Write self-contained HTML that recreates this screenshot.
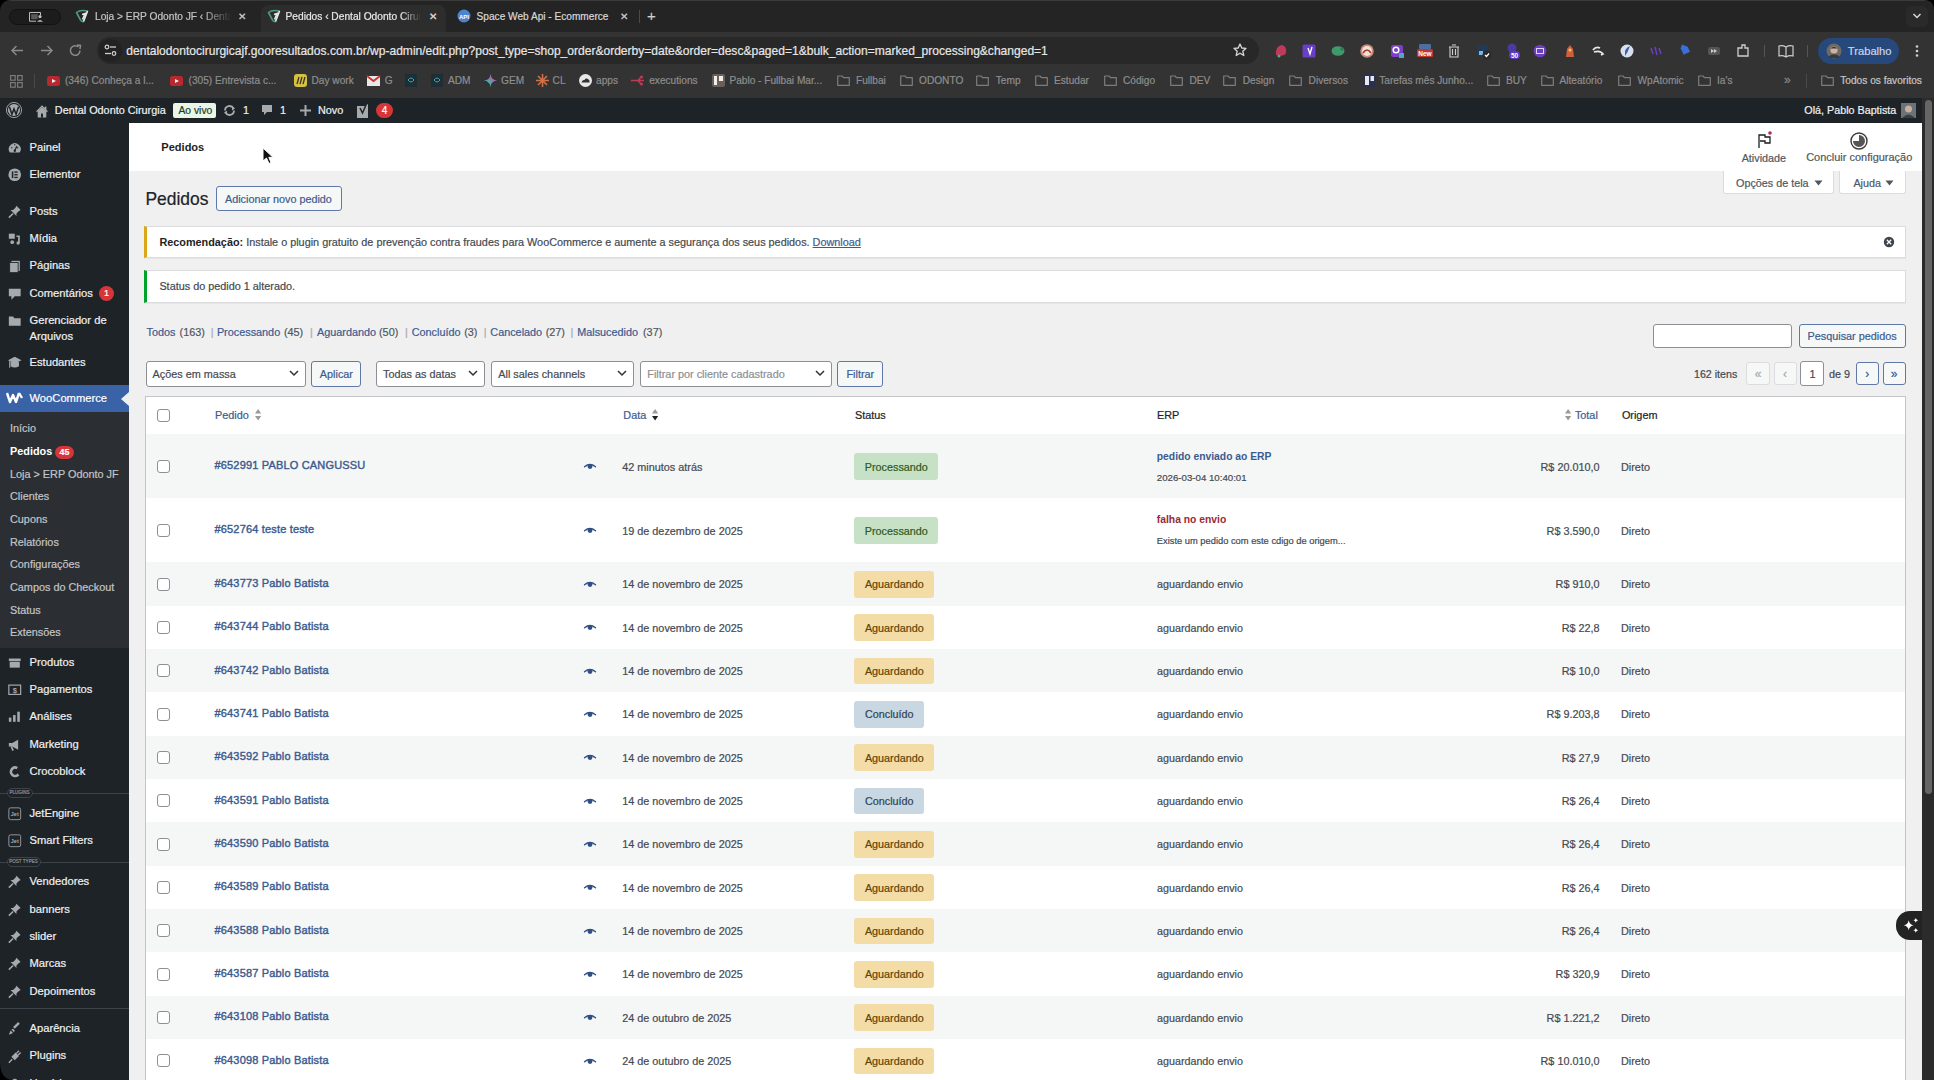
<!DOCTYPE html><html><head><meta charset="utf-8"><title>Pedidos</title><style>
html,body{margin:0;padding:0;}
body{width:1934px;height:1080px;overflow:hidden;position:relative;background:#1d2327;font-family:"Liberation Sans", sans-serif;}
.t{position:absolute;white-space:nowrap;line-height:1;-webkit-text-stroke:0.2px currentColor;}
b{-webkit-text-stroke:0;}
.b{position:absolute;box-sizing:border-box;}
svg{position:absolute;overflow:visible;}
</style></head><body>
<div class="b" style="left:0px;top:0px;width:1934px;height:32px;background:#242424;"></div>
<div class="b" style="left:0px;top:32px;width:1934px;height:65px;background:#353535;"></div>
<div class="b" style="left:0px;top:0px;width:1934px;height:1px;background:#3a3a3a;"></div>
<div class="b" style="left:8.8px;top:8.5px;width:52.2px;height:16px;background:#1c1c1c;border-radius:8px;border:1px solid #121212;"></div>
<svg style="left:29px;top:12px;" width="15" height="10" viewBox="0 0 15 10"><path d="M11.5 3 V0.5 H0.5 V9.2 H7" stroke="#bdbdbd" fill="none" stroke-width="1"/><rect x="2.2" y="2.2" width="6.5" height="5" fill="#5a5a5a"/><circle cx="11" cy="4.6" r="1.6" fill="#bdbdbd"/><path d="M8 9.8 Q11 6.2 14 9.8 Z" fill="#bdbdbd"/></svg>
<svg style="left:75px;top:9px;" width="14" height="14" viewBox="0 0 14 14"><path d="M1.5 3.5 Q5 0.5 12.5 2 L8.5 12.5 Q6.5 13 5.5 11 Z" fill="none" stroke="#4f9a7e" stroke-width="1.6" stroke-linejoin="round"/><path d="M12.5 2 L8.5 12.5 M7 5.5 L10 4.5 L7.5 10.5" fill="none" stroke="#e6e6e6" stroke-width="1.5"/></svg>
<div class="t" style="left:95px;top:12.37px;font-size:10.2px;color:#c4c4c4;font-weight:normal;width:137px;overflow:hidden;-webkit-mask-image:linear-gradient(90deg,#000 78%,transparent);">Loja &gt; ERP Odonto JF ‹ Denta</div>
<div class="t" style="left:238px;top:12.04px;font-size:10px;color:#d0d0d0;font-weight:normal;">✕</div>
<div class="b" style="left:261px;top:5px;width:185px;height:32px;background:#2d2d2d;border-radius:8px 8px 0 0;"></div>
<svg style="left:267px;top:9px;" width="14" height="14" viewBox="0 0 14 14"><path d="M1.5 3.5 Q5 0.5 12.5 2 L8.5 12.5 Q6.5 13 5.5 11 Z" fill="none" stroke="#4f9a7e" stroke-width="1.6" stroke-linejoin="round"/><path d="M12.5 2 L8.5 12.5 M7 5.5 L10 4.5 L7.5 10.5" fill="none" stroke="#e6e6e6" stroke-width="1.5"/></svg>
<div class="t" style="left:285.5px;top:12.37px;font-size:10.2px;color:#e8e8e8;font-weight:normal;width:135px;overflow:hidden;-webkit-mask-image:linear-gradient(90deg,#000 85%,transparent);">Pedidos ‹ Dental Odonto Cirurgia</div>
<div class="t" style="left:429px;top:12.04px;font-size:10px;color:#e0e0e0;font-weight:normal;">✕</div>
<svg style="left:457px;top:9px;" width="14" height="14" viewBox="0 0 14 14"><circle cx="7" cy="7" r="6.5" fill="#4a86d0"/><text x="7" y="9.5" font-size="6" text-anchor="middle" fill="#fff" font-family="Liberation Sans" font-weight="bold">API</text></svg>
<div class="t" style="left:476.6px;top:12.43px;font-size:10.12px;color:#d8d8d8;font-weight:normal;">Space Web Api - Ecommerce</div>
<div class="t" style="left:620px;top:12.04px;font-size:10px;color:#d0d0d0;font-weight:normal;">✕</div>
<div class="b" style="left:639px;top:10px;width:1px;height:13px;background:#4a4a4a;"></div>
<div class="t" style="left:647px;top:8.3px;font-size:15px;color:#d0d0d0;font-weight:normal;">+</div>
<div class="b" style="left:1906px;top:6px;width:22px;height:21px;background:#2a2a2a;border-radius:6px;"></div>
<svg style="left:1912px;top:12px;" width="10" height="8" viewBox="0 0 10 8"><path d="M1.5 2 L5 5.5 L8.5 2" fill="none" stroke="#d8d8d8" stroke-width="1.5"/></svg>
<div class="b" style="left:0px;top:32px;width:1934px;height:33px;background:#333333;"></div>
<svg style="left:10px;top:44px;" width="14" height="13" viewBox="0 0 14 13"><path d="M13 6.5 H2 M6.5 2 L2 6.5 L6.5 11" fill="none" stroke="#8a8a8a" stroke-width="1.5"/></svg>
<svg style="left:40px;top:44px;" width="14" height="13" viewBox="0 0 14 13"><path d="M1 6.5 H12 M7.5 2 L12 6.5 L7.5 11" fill="none" stroke="#8a8a8a" stroke-width="1.5"/></svg>
<svg style="left:69px;top:44px;" width="13" height="13" viewBox="0 0 13 13"><path d="M11 6.5 A4.8 4.8 0 1 1 9.5 3" fill="none" stroke="#8a8a8a" stroke-width="1.5"/><path d="M8 1 L11.5 1.5 L11 5" fill="none" stroke="#8a8a8a" stroke-width="1.5"/></svg>
<div class="b" style="left:97px;top:37px;width:1162px;height:27px;background:#282828;border-radius:14px;"></div>
<div class="b" style="left:99px;top:39px;width:23px;height:23px;background:#222;border-radius:12px;"></div>
<svg style="left:104px;top:44px;" width="14" height="13" viewBox="0 0 14 13"><circle cx="3" cy="3" r="1.8" fill="none" stroke="#d0d0d0" stroke-width="1.2"/><path d="M6 3 H12" stroke="#d0d0d0" stroke-width="1.3"/><circle cx="10" cy="9.5" r="1.8" fill="none" stroke="#d0d0d0" stroke-width="1.2"/><path d="M1 9.5 H7" stroke="#d0d0d0" stroke-width="1.3"/></svg>
<div class="t" style="left:126.3px;top:44.8px;font-size:12.05px;color:#e6e6e6;font-weight:normal;">dentalodontocirurgicajf.gooresultados.com.br/wp-admin/edit.php?post_type=shop_order&amp;orderby=date&amp;order=desc&amp;paged=1&amp;bulk_action=marked_processing&amp;changed=1</div>
<svg style="left:1233px;top:43px;" width="14" height="14" viewBox="0 0 14 14"><path d="M7 1 L8.8 5 L13 5.3 L9.8 8.2 L10.8 12.5 L7 10.2 L3.2 12.5 L4.2 8.2 L1 5.3 L5.2 5 Z" fill="none" stroke="#d8d8d8" stroke-width="1.3" stroke-linejoin="round"/></svg>
<svg style="left:1280.5px;top:50.5px;" width="1" height="1" viewBox="0 0 1 1"><path d="M-5 4 Q-6 -5 1 -6 Q6 -5 5 2 Q3 6 -5 4Z" fill="#c0395a"/><circle cx="-2" cy="5" r="1.5" fill="#4caf88"/></svg>
<svg style="left:1309.4px;top:50.5px;" width="1" height="1" viewBox="0 0 1 1"><rect x="-6.5" y="-6.5" width="13" height="13" rx="1.5" fill="#6a3fc8"/><path d="M-1 -3 L1 3 L3 -4" stroke="#fff" stroke-width="1.3" fill="none"/></svg>
<svg style="left:1338px;top:50.5px;" width="1" height="1" viewBox="0 0 1 1"><ellipse cx="0" cy="0" rx="6.5" ry="4.8" fill="#3e9a6a"/><circle cx="4" cy="-2" r="1.8" fill="#2d7b55"/></svg>
<svg style="left:1367px;top:50.5px;" width="1" height="1" viewBox="0 0 1 1"><circle cx="0" cy="0" r="6.8" fill="#c98a7a"/><circle cx="0" cy="0" r="5" fill="#efe2da"/><path d="M-4 2 Q0 -4 4 2" stroke="#b03a2e" stroke-width="1.6" fill="none"/></svg>
<svg style="left:1397px;top:50.5px;" width="1" height="1" viewBox="0 0 1 1"><rect x="-6" y="-6" width="12" height="12" rx="2" fill="#7b3fc9"/><circle cx="-1" cy="-1" r="2.8" fill="none" stroke="#fff" stroke-width="1.5"/><rect x="2" y="2" width="5" height="5" fill="#4aa8c8"/></svg>
<svg style="left:1424.8px;top:50.5px;" width="1" height="1" viewBox="0 0 1 1"><rect x="-6" y="-7" width="12" height="5" rx="1" fill="#4b6fa0"/><rect x="-8" y="-2" width="16" height="8" rx="1.5" fill="#c0392b"/><text x="0" y="4.5" font-size="6.5" font-family="Liberation Sans" font-weight="bold" fill="#fff" text-anchor="middle">New</text></svg>
<svg style="left:1453.6px;top:50.5px;" width="1" height="1" viewBox="0 0 1 1"><path d="M-5 -4 H5 M-4 -4 V6 H4 V-4 M-1.5 -2 V4 M1.5 -2 V4 M-2 -6 H2" stroke="#cfcfcf" stroke-width="1.1" fill="none"/></svg>
<svg style="left:1484.3px;top:50.5px;" width="1" height="1" viewBox="0 0 1 1"><rect x="-6.5" y="-6" width="10" height="11" fill="#1e3b5c"/><rect x="-5" y="0" width="4" height="4" fill="#7fb3e0"/><circle cx="3" cy="4" r="4.5" fill="#2a2a2a"/><path d="M1 4 L2.5 5.5 L5 2.5" stroke="#fff" stroke-width="1.2" fill="none"/></svg>
<svg style="left:1514px;top:50.5px;" width="1" height="1" viewBox="0 0 1 1"><circle cx="-2" cy="-3" r="4.5" fill="#4b3aa0"/><rect x="-5" y="0" width="11" height="8" rx="4" fill="#5a3ec8"/><text x="0.5" y="6.5" font-size="6.5" font-family="Liberation Sans" font-weight="bold" fill="#fff" text-anchor="middle">50</text></svg>
<svg style="left:1540px;top:50.5px;" width="1" height="1" viewBox="0 0 1 1"><circle cx="0" cy="0" r="6.3" fill="#6c3fc0"/><rect x="-3.5" y="-2.5" width="7" height="5" fill="none" stroke="#e0d0ff" stroke-width="1"/></svg>
<svg style="left:1569.7px;top:50.5px;" width="1" height="1" viewBox="0 0 1 1"><path d="M-4 6 L-3 -2 L0 -6 L3 -2 L4 6 Z" fill="#d0603a"/><circle cx="0" cy="-1" r="1.5" fill="#f0c080"/></svg>
<svg style="left:1597.7px;top:50.5px;" width="1" height="1" viewBox="0 0 1 1"><path d="M-5 -1 Q-2 -5 2 -3 M-4 1 Q2 -1 5 3 L3 4" stroke="#e8e8e8" stroke-width="1.8" fill="none"/></svg>
<svg style="left:1626.7px;top:50.5px;" width="1" height="1" viewBox="0 0 1 1"><circle cx="0" cy="0" r="6.5" fill="#d8e0ee"/><path d="M-2 5 Q-3 -3 3 -5 Q1 1 -2 5Z" fill="#3a5fa8"/></svg>
<svg style="left:1656px;top:50.5px;" width="1" height="1" viewBox="0 0 1 1"><path d="M-5 -3 L-3 3 M-1 -4 L1 4 M3 -3 L5 3" stroke="#6a3fc8" stroke-width="1.5"/></svg>
<svg style="left:1684.7px;top:50.5px;" width="1" height="1" viewBox="0 0 1 1"><path d="M-5 -5 H1 L5 -1 L0 4 L-5 -1 Z" fill="#3a6fd8" transform="rotate(20)"/></svg>
<svg style="left:1713.7px;top:50.5px;" width="1" height="1" viewBox="0 0 1 1"><rect x="-6" y="-4" width="12" height="8" rx="2.5" fill="#555"/><path d="M-3 -2 L0 0 L-3 2Z M0 -2 L3 0 L0 2Z" fill="#ccc"/></svg>
<svg style="left:1742.7px;top:50.5px;" width="1" height="1" viewBox="0 0 1 1"><path d="M-5 -3 H-1 V-6 H2 V-3 H5 V5 H-5 Z" fill="none" stroke="#cfcfcf" stroke-width="1.3"/></svg>
<div class="b" style="left:1764px;top:45px;width:1px;height:12px;background:#555;"></div>
<svg style="left:1786px;top:50.5px;" width="1" height="1" viewBox="0 0 1 1"><path d="M-7 -5 Q-3.5 -6 0 -4 Q3.5 -6 7 -5 V5 Q3.5 4 0 6 Q-3.5 4 -7 5 Z M0 -4 V6" fill="none" stroke="#cfcfcf" stroke-width="1.2"/></svg>
<div class="b" style="left:1807px;top:45px;width:1px;height:12px;background:#555;"></div>
<div class="b" style="left:1818px;top:38px;width:81px;height:26px;background:#27487a;border-radius:13px;"></div>
<svg style="left:1833.6px;top:51px;" width="1" height="1" viewBox="0 0 1 1"><circle cx="0" cy="0" r="7.5" fill="#6f6a66"/><circle cx="0" cy="-1" r="3.6" fill="#c9b3a5"/><path d="M-5.5 5.5 Q0 1 5.5 5.5 L4 7 H-4Z" fill="#3a3a3a"/><path d="M-3.6 -2.5 Q0 -6 3.6 -2.5" fill="#3b3330"/></svg>
<div class="t" style="left:1847.8px;top:45.52px;font-size:11.2px;color:#c9d6ea;font-weight:normal;">Trabalho</div>
<svg style="left:1917px;top:50.5px;" width="1" height="1" viewBox="0 0 1 1"><circle cx="0" cy="-4.5" r="1.3" fill="#cfcfcf"/><circle cx="0" cy="0" r="1.3" fill="#cfcfcf"/><circle cx="0" cy="4.5" r="1.3" fill="#cfcfcf"/></svg>
<div class="b" style="left:0px;top:65px;width:1934px;height:33px;background:#333333;"></div>
<svg style="left:10px;top:75px;" width="13" height="13" viewBox="0 0 13 13"><rect x="0.6" y="0.6" width="4.6" height="4.6" fill="none" stroke="#7a7a7a" stroke-width="1.2"/><rect x="7.6" y="0.6" width="4.6" height="4.6" fill="none" stroke="#7a7a7a" stroke-width="1.2"/><rect x="0.6" y="7.6" width="4.6" height="4.6" fill="none" stroke="#7a7a7a" stroke-width="1.2"/><rect x="7.6" y="7.6" width="4.6" height="4.6" fill="none" stroke="#7a7a7a" stroke-width="1.2"/></svg>
<div class="b" style="left:34px;top:74px;width:1px;height:14px;background:#4a4a4a;"></div>
<svg style="left:47.2px;top:75.5px;" width="13" height="10" viewBox="0 0 13 10"><rect x="0" y="0" width="13" height="10" rx="2.5" fill="#b8282e"/><path d="M5 3 L9 5 L5 7Z" fill="#eee"/></svg>
<div class="t" style="left:65px;top:75.92px;font-size:10.13px;color:#8e8e8e;font-weight:normal;">(346) Conheça a l...</div>
<svg style="left:170px;top:75.5px;" width="13" height="10" viewBox="0 0 13 10"><rect x="0" y="0" width="13" height="10" rx="2.5" fill="#b8282e"/><path d="M5 3 L9 5 L5 7Z" fill="#eee"/></svg>
<div class="t" style="left:188.6px;top:75.92px;font-size:10.13px;color:#8e8e8e;font-weight:normal;">(305) Entrevista c...</div>
<svg style="left:293.6px;top:74.0px;" width="13" height="13" viewBox="0 0 13 13"><rect x="0" y="0" width="13" height="13" rx="3" fill="#d8c040"/><path d="M3 10 L5 3 M6 10 L8 3 M9 10 L11 3" stroke="#333" stroke-width="1.3"/></svg>
<div class="t" style="left:311.5px;top:75.92px;font-size:10.13px;color:#8e8e8e;font-weight:normal;">Day work</div>
<svg style="left:366.8px;top:74.0px;" width="13" height="13" viewBox="0 0 13 13"><rect x="0" y="2" width="13" height="10" fill="#e8e8e8"/><path d="M0 2 L6.5 7 L13 2" stroke="#d03030" stroke-width="1.8" fill="none"/></svg>
<div class="t" style="left:384.7px;top:75.92px;font-size:10.13px;color:#8e8e8e;font-weight:normal;">G</div>
<svg style="left:405px;top:74.0px;" width="13" height="13" viewBox="0 0 13 13"><rect x="0" y="0" width="12" height="13" fill="#1e2e34"/><path d="M3 6 Q6 2 9 6 Q6 10 3 6" stroke="#3aa8b8" stroke-width="1" fill="none"/></svg>
<svg style="left:430.6px;top:74.0px;" width="13" height="13" viewBox="0 0 13 13"><rect x="0" y="0" width="12" height="13" fill="#1e2e34"/><path d="M3 6 Q6 2 9 6 Q6 10 3 6" stroke="#3aa8b8" stroke-width="1" fill="none"/></svg>
<div class="t" style="left:448px;top:75.92px;font-size:10.13px;color:#8e8e8e;font-weight:normal;">ADM</div>
<svg style="left:483.7px;top:74.0px;" width="13" height="13" viewBox="0 0 13 13"><path d="M6.5 0 Q7 6 13 6.5 Q7 7 6.5 13 Q6 7 0 6.5 Q6 6 6.5 0Z" fill="#5a8ae8"/><path d="M6.5 0 Q7 6 13 6.5 L6.5 6.5Z" fill="#e85a5a"/><path d="M0 6.5 Q6 7 6.5 13 L6.5 6.5Z" fill="#4ac060"/></svg>
<div class="t" style="left:501px;top:75.92px;font-size:10.13px;color:#8e8e8e;font-weight:normal;">GEM</div>
<svg style="left:535.8px;top:74.0px;" width="13" height="13" viewBox="0 0 13 13"><path d="M6.5 0 V13 M0 6.5 H13 M2 2 L11 11 M11 2 L2 11" stroke="#d0704a" stroke-width="1.6"/></svg>
<div class="t" style="left:552.6px;top:75.92px;font-size:10.13px;color:#8e8e8e;font-weight:normal;">CL</div>
<svg style="left:578.7px;top:74.0px;" width="13" height="13" viewBox="0 0 13 13"><circle cx="6.5" cy="6.5" r="6.5" fill="#e8e8e8"/><path d="M2.5 8.5 Q3 5.5 5.5 6 Q7 3.5 9.5 5.5 Q11 6 10.5 8.5Z" fill="#333"/></svg>
<div class="t" style="left:596px;top:75.92px;font-size:10.13px;color:#8e8e8e;font-weight:normal;">apps</div>
<svg style="left:631.3px;top:74.0px;" width="13" height="13" viewBox="0 0 13 13"><path d="M0 6.5 H13 M7 6.5 L10 3 M7 6.5 L10 10" stroke="#c03a5a" stroke-width="1.5" fill="none"/><circle cx="10.5" cy="3" r="1.5" fill="#c03a5a"/><circle cx="10.5" cy="10" r="1.5" fill="#c03a5a"/></svg>
<div class="t" style="left:649.2px;top:75.92px;font-size:10.13px;color:#8e8e8e;font-weight:normal;">executions</div>
<svg style="left:712px;top:74.0px;" width="13" height="13" viewBox="0 0 13 13"><rect x="0" y="0" width="13" height="13" rx="2" fill="#6a6058"/><rect x="2" y="2" width="3" height="9" fill="#eee"/><rect x="7" y="2" width="4" height="5" fill="#eee"/></svg>
<div class="t" style="left:729.4px;top:75.92px;font-size:10.13px;color:#8e8e8e;font-weight:normal;">Pablo - Fullbai Mar...</div>
<svg style="left:836.8px;top:75.0px;" width="13" height="11" viewBox="0 0 13 11"><path d="M0.7 1 H5 L6.5 2.7 H12.3 V10.3 H0.7 Z" fill="none" stroke="#7d7d7d" stroke-width="1.2" stroke-linejoin="round"/></svg>
<div class="t" style="left:856px;top:75.92px;font-size:10.13px;color:#8e8e8e;font-weight:normal;">Fullbai</div>
<svg style="left:900px;top:75.0px;" width="13" height="11" viewBox="0 0 13 11"><path d="M0.7 1 H5 L6.5 2.7 H12.3 V10.3 H0.7 Z" fill="none" stroke="#7d7d7d" stroke-width="1.2" stroke-linejoin="round"/></svg>
<div class="t" style="left:919px;top:75.92px;font-size:10.13px;color:#8e8e8e;font-weight:normal;">ODONTO</div>
<svg style="left:976px;top:75.0px;" width="13" height="11" viewBox="0 0 13 11"><path d="M0.7 1 H5 L6.5 2.7 H12.3 V10.3 H0.7 Z" fill="none" stroke="#7d7d7d" stroke-width="1.2" stroke-linejoin="round"/></svg>
<div class="t" style="left:995.8px;top:75.92px;font-size:10.13px;color:#8e8e8e;font-weight:normal;">Temp</div>
<svg style="left:1035px;top:75.0px;" width="13" height="11" viewBox="0 0 13 11"><path d="M0.7 1 H5 L6.5 2.7 H12.3 V10.3 H0.7 Z" fill="none" stroke="#7d7d7d" stroke-width="1.2" stroke-linejoin="round"/></svg>
<div class="t" style="left:1054px;top:75.92px;font-size:10.13px;color:#8e8e8e;font-weight:normal;">Estudar</div>
<svg style="left:1103.8px;top:75.0px;" width="13" height="11" viewBox="0 0 13 11"><path d="M0.7 1 H5 L6.5 2.7 H12.3 V10.3 H0.7 Z" fill="none" stroke="#7d7d7d" stroke-width="1.2" stroke-linejoin="round"/></svg>
<div class="t" style="left:1123px;top:75.92px;font-size:10.13px;color:#8e8e8e;font-weight:normal;">Código</div>
<svg style="left:1170.3px;top:75.0px;" width="13" height="11" viewBox="0 0 13 11"><path d="M0.7 1 H5 L6.5 2.7 H12.3 V10.3 H0.7 Z" fill="none" stroke="#7d7d7d" stroke-width="1.2" stroke-linejoin="round"/></svg>
<div class="t" style="left:1189.4px;top:75.92px;font-size:10.13px;color:#8e8e8e;font-weight:normal;">DEV</div>
<svg style="left:1223.4px;top:75.0px;" width="13" height="11" viewBox="0 0 13 11"><path d="M0.7 1 H5 L6.5 2.7 H12.3 V10.3 H0.7 Z" fill="none" stroke="#7d7d7d" stroke-width="1.2" stroke-linejoin="round"/></svg>
<div class="t" style="left:1242.8px;top:75.92px;font-size:10.13px;color:#8e8e8e;font-weight:normal;">Design</div>
<svg style="left:1289.2px;top:75.0px;" width="13" height="11" viewBox="0 0 13 11"><path d="M0.7 1 H5 L6.5 2.7 H12.3 V10.3 H0.7 Z" fill="none" stroke="#7d7d7d" stroke-width="1.2" stroke-linejoin="round"/></svg>
<div class="t" style="left:1308.6px;top:75.92px;font-size:10.13px;color:#8e8e8e;font-weight:normal;">Diversos</div>
<svg style="left:1363.2px;top:74.0px;" width="13" height="13" viewBox="0 0 13 13"><rect x="0" y="0" width="13" height="13" rx="2" fill="#2a3050"/><rect x="2" y="2" width="4" height="9" fill="#e8e8f0"/><rect x="7.5" y="2" width="3.5" height="5" fill="#e8e8f0"/></svg>
<div class="t" style="left:1379.3px;top:75.92px;font-size:10.13px;color:#8e8e8e;font-weight:normal;">Tarefas mês Junho...</div>
<svg style="left:1487px;top:75.0px;" width="13" height="11" viewBox="0 0 13 11"><path d="M0.7 1 H5 L6.5 2.7 H12.3 V10.3 H0.7 Z" fill="none" stroke="#7d7d7d" stroke-width="1.2" stroke-linejoin="round"/></svg>
<div class="t" style="left:1506px;top:75.92px;font-size:10.13px;color:#8e8e8e;font-weight:normal;">BUY</div>
<svg style="left:1540.5px;top:75.0px;" width="13" height="11" viewBox="0 0 13 11"><path d="M0.7 1 H5 L6.5 2.7 H12.3 V10.3 H0.7 Z" fill="none" stroke="#7d7d7d" stroke-width="1.2" stroke-linejoin="round"/></svg>
<div class="t" style="left:1559.5px;top:75.92px;font-size:10.13px;color:#8e8e8e;font-weight:normal;">Alteatório</div>
<svg style="left:1618.2px;top:75.0px;" width="13" height="11" viewBox="0 0 13 11"><path d="M0.7 1 H5 L6.5 2.7 H12.3 V10.3 H0.7 Z" fill="none" stroke="#7d7d7d" stroke-width="1.2" stroke-linejoin="round"/></svg>
<div class="t" style="left:1637.5px;top:75.92px;font-size:10.13px;color:#8e8e8e;font-weight:normal;">WpAtomic</div>
<svg style="left:1698.4px;top:75.0px;" width="13" height="11" viewBox="0 0 13 11"><path d="M0.7 1 H5 L6.5 2.7 H12.3 V10.3 H0.7 Z" fill="none" stroke="#7d7d7d" stroke-width="1.2" stroke-linejoin="round"/></svg>
<div class="t" style="left:1717px;top:75.92px;font-size:10.13px;color:#8e8e8e;font-weight:normal;">Ia's</div>
<div class="t" style="left:1784px;top:74.34px;font-size:12px;color:#8a8a8a;font-weight:normal;">»</div>
<div class="b" style="left:1806px;top:74px;width:1px;height:14px;background:#4a4a4a;"></div>
<svg style="left:1820.7px;top:75.0px;" width="13" height="11" viewBox="0 0 13 11"><path d="M0.7 1 H5 L6.5 2.7 H12.3 V10.3 H0.7 Z" fill="none" stroke="#7d7d7d" stroke-width="1.2" stroke-linejoin="round"/></svg>
<div class="t" style="left:1840.3px;top:75.92px;font-size:10.13px;color:#c8c8c8;font-weight:normal;">Todos os favoritos</div>
<div class="b" style="left:0px;top:98px;width:1922px;height:25px;background:#1d2327;"></div>
<svg style="left:6px;top:102.4px;" width="16" height="16" viewBox="0 0 16 16"><circle cx="8" cy="8" r="7.6" fill="none" stroke="#a7aaad" stroke-width="0.9"/><circle cx="8" cy="8" r="6.1" fill="#a7aaad"/><path d="M3.4 4.8 L5.9 12.2 L8 6.9 L10.1 12.2 L12.6 4.8" fill="none" stroke="#1d2327" stroke-width="1.5"/></svg>
<svg style="left:36px;top:104.5px;" width="12" height="13" viewBox="0 0 12 13"><rect x="8.6" y="1.6" width="1.8" height="3.5" fill="#a7aaad"/><path d="M1.7 6.3 L6 2.3 L10.3 6.3 V12.5 H1.7 Z" fill="#a7aaad"/><path d="M0.6 6.8 L6 1.2 L11.4 6.8" fill="none" stroke="#a7aaad" stroke-width="1.3"/><rect x="5" y="8.6" width="2" height="3.9" fill="#1d2327"/></svg>
<div class="t" style="left:54.8px;top:105.12px;font-size:10.85px;color:#f0f0f1;font-weight:normal;">Dental Odonto Cirurgia</div>
<div class="b" style="left:173px;top:103px;width:43px;height:15px;background:#eaf6e6;border-radius:2px;"></div>
<div class="t" style="left:178.5px;top:105.58px;font-size:10.3px;color:#1f3a1f;font-weight:normal;">Ao vivo</div>
<svg style="left:223px;top:104px;" width="13" height="13" viewBox="0 0 13 13"><path d="M2 6.5 A4.5 4.5 0 0 1 10.5 4.5 M11 6.5 A4.5 4.5 0 0 1 2.5 8.5" fill="none" stroke="#a7aaad" stroke-width="1.8"/><path d="M9 2 L12 4.5 L9 6.5Z M4 6.5 L1 8.5 L4 11Z" fill="#a7aaad"/></svg>
<div class="t" style="left:243px;top:105.12px;font-size:10.85px;color:#f0f0f1;font-weight:normal;">1</div>
<svg style="left:261px;top:104px;" width="12" height="13" viewBox="0 0 12 13"><path d="M1 1 H11 V8 H6 L3 11 V8 H1 Z" fill="#a7aaad"/></svg>
<div class="t" style="left:280px;top:105.12px;font-size:10.85px;color:#f0f0f1;font-weight:normal;">1</div>
<svg style="left:300px;top:105px;" width="11" height="11" viewBox="0 0 11 11"><path d="M5.5 0 V11 M0 5.5 H11" stroke="#a7aaad" stroke-width="2"/></svg>
<div class="t" style="left:318px;top:105.12px;font-size:10.85px;color:#f0f0f1;font-weight:normal;">Novo</div>
<svg style="left:356px;top:103px;" width="14" height="15" viewBox="0 0 14 15"><path d="M1 3 H9 L12 1 V15 H1 Z" fill="#a7aaad"/><path d="M4 5 L6.5 10 L10 2" stroke="#1d2327" stroke-width="1.5" fill="none"/></svg>
<div class="b" style="left:376px;top:103px;width:17px;height:15px;background:#d63638;border-radius:8px;"></div>
<div class="t" style="left:84.5px;width:600px;text-align:center;top:105.83px;font-size:10px;color:#fff;font-weight:normal;">4</div>
<div class="t" style="left:1804.3px;top:105.2px;font-size:10.75px;color:#f0f0f1;font-weight:normal;">Olá, Pablo Baptista</div>
<div class="b" style="left:1901px;top:103px;width:15px;height:15px;background:#7b8088;"></div>
<svg style="left:1901px;top:103px;" width="15" height="15" viewBox="0 0 15 15"><rect width="15" height="15" fill="#6d7278"/><circle cx="7.5" cy="6" r="3.5" fill="#c8b0a0"/><path d="M1 15 Q7.5 8 14 15Z" fill="#3a3f45"/></svg>
<div class="b" style="left:0px;top:123px;width:129px;height:957px;background:#1d2327;"></div>
<div class="t" style="left:29.5px;top:141.72px;font-size:11.2px;color:#f0f0f1;font-weight:normal;">Painel</div>
<svg style="left:7.8px;top:140.89999999999998px" width="13.5" height="13.5" viewBox="0 0 16 16"><path d="M2.2 13.5 A7 7 0 1 1 13.8 13.5 Z" fill="#a7aaad"/><path d="M8 11.5 L10.5 6" stroke="#1d2327" stroke-width="1.4"/><circle cx="8" cy="11.5" r="1.4" fill="#1d2327"/><circle cx="4.5" cy="8" r="0.8" fill="#1d2327"/><circle cx="8" cy="4.5" r="0.8" fill="#1d2327"/><circle cx="11.5" cy="8" r="0.8" fill="#1d2327"/></svg>
<div class="t" style="left:29.5px;top:169.02px;font-size:11.2px;color:#f0f0f1;font-weight:normal;">Elementor</div>
<svg style="left:7.8px;top:168.2px" width="13.5" height="13.5" viewBox="0 0 16 16"><circle cx="8" cy="8" r="7.5" fill="#a7aaad"/><rect x="4.5" y="4" width="1.8" height="8" fill="#1d2327"/><rect x="7.5" y="4" width="4" height="1.6" fill="#1d2327"/><rect x="7.5" y="7.2" width="4" height="1.6" fill="#1d2327"/><rect x="7.5" y="10.4" width="4" height="1.6" fill="#1d2327"/></svg>
<div class="t" style="left:29.5px;top:205.72px;font-size:11.2px;color:#f0f0f1;font-weight:normal;">Posts</div>
<svg style="left:7.8px;top:204.89999999999998px" width="13.5" height="13.5" viewBox="0 0 16 16"><path d="M10 1 L15 6 L13 7 L10 10 L10 13 L3 6 L6 6 L9 3 Z" fill="#a7aaad"/><path d="M6 10 L1 15" stroke="#a7aaad" stroke-width="1.8"/></svg>
<div class="t" style="left:29.5px;top:233.02px;font-size:11.2px;color:#f0f0f1;font-weight:normal;">Mídia</div>
<svg style="left:7.8px;top:232.2px" width="13.5" height="13.5" viewBox="0 0 16 16"><rect x="1" y="2" width="7" height="6" fill="#a7aaad"/><path d="M10 4 H14 V13 A2 2 0 1 1 12 11 V6 H10Z" fill="#a7aaad"/><circle cx="5" cy="12" r="2.2" fill="#a7aaad"/></svg>
<div class="t" style="left:29.5px;top:260.42px;font-size:11.2px;color:#f0f0f1;font-weight:normal;">Páginas</div>
<svg style="left:7.8px;top:259.59999999999997px" width="13.5" height="13.5" viewBox="0 0 16 16"><rect x="4" y="1" width="10" height="12" fill="#a7aaad"/><rect x="2" y="3" width="10" height="12" fill="#a7aaad" stroke="#1d2327" stroke-width="1"/></svg>
<div class="t" style="left:29.5px;top:287.72px;font-size:11.2px;color:#f0f0f1;font-weight:normal;">Comentários</div>
<svg style="left:7.8px;top:286.9px" width="13.5" height="13.5" viewBox="0 0 16 16"><path d="M1 2 H15 V11 H8 L4 15 V11 H1 Z" fill="#a7aaad"/></svg>
<div class="t" style="left:29.5px;top:315.22px;font-size:11.2px;color:#f0f0f1;font-weight:normal;">Gerenciador de</div>
<svg style="left:7.8px;top:314.4px" width="13.5" height="13.5" viewBox="0 0 16 16"><path d="M1 3 H6 L7.5 5 H15 V14 H1 Z" fill="#a7aaad"/></svg>
<div class="t" style="left:29.5px;top:356.72px;font-size:11.2px;color:#f0f0f1;font-weight:normal;">Estudantes</div>
<svg style="left:7.8px;top:355.9px" width="13.5" height="13.5" viewBox="0 0 16 16"><path d="M0 5 L8 1 L16 5 L8 9 Z" fill="#a7aaad"/><path d="M3 7 V12 Q8 15 13 12 V7" fill="#a7aaad"/><path d="M2 5 V14" stroke="#a7aaad" stroke-width="1.2"/></svg>
<div class="t" style="left:29.5px;top:330.52px;font-size:11.2px;color:#f0f0f1;font-weight:normal;">Arquivos</div>
<div class="b" style="left:99px;top:286px;width:15px;height:15px;background:#d63638;border-radius:8px;"></div>
<div class="t" style="left:-193.5px;width:600px;text-align:center;top:288.88px;font-size:9px;color:#fff;font-weight:normal;">1</div>
<div class="b" style="left:0px;top:385px;width:129px;height:27px;background:#3a62a6;"></div>
<svg style="left:6px;top:391px;" width="18" height="12" viewBox="0 0 18 12"><path d="M1 2 L4 11 L7 4 L10 11 L13 2" fill="none" stroke="#fff" stroke-width="2.4" stroke-linejoin="round"/><path d="M13 2 L16 7" stroke="#fff" stroke-width="2.4"/></svg>
<div class="t" style="left:29.5px;top:392.82px;font-size:11.2px;color:#fff;font-weight:normal;">WooCommerce</div>
<svg style="left:121px;top:391.5px;" width="8" height="14" viewBox="0 0 8 14"><path d="M8 0 L0 7 L8 14 Z" fill="#f0f0f1"/></svg>
<div class="b" style="left:0px;top:412px;width:129px;height:236px;background:#2b2f33;"></div>
<div class="t" style="left:10px;top:423.32px;font-size:10.85px;color:#c3c4c7;font-weight:normal;">Início</div>
<div class="t" style="left:10px;top:446.12px;font-size:10.85px;color:#ffffff;font-weight:bold;-webkit-text-stroke:0;">Pedidos</div>
<div class="t" style="left:10px;top:468.72px;font-size:10.85px;color:#c3c4c7;font-weight:normal;">Loja &gt; ERP Odonto JF</div>
<div class="t" style="left:10px;top:491.42px;font-size:10.85px;color:#c3c4c7;font-weight:normal;">Clientes</div>
<div class="t" style="left:10px;top:514.12px;font-size:10.85px;color:#c3c4c7;font-weight:normal;">Cupons</div>
<div class="t" style="left:10px;top:536.82px;font-size:10.85px;color:#c3c4c7;font-weight:normal;">Relatórios</div>
<div class="t" style="left:10px;top:559.42px;font-size:10.85px;color:#c3c4c7;font-weight:normal;">Configurações</div>
<div class="t" style="left:10px;top:582.12px;font-size:10.85px;color:#c3c4c7;font-weight:normal;">Campos do Checkout</div>
<div class="t" style="left:10px;top:604.82px;font-size:10.85px;color:#c3c4c7;font-weight:normal;">Status</div>
<div class="t" style="left:10px;top:627.42px;font-size:10.85px;color:#c3c4c7;font-weight:normal;">Extensões</div>
<div class="b" style="left:55px;top:446px;width:19px;height:13px;background:#d63638;border-radius:7px;"></div>
<div class="t" style="left:-235.5px;width:600px;text-align:center;top:447.85px;font-size:8.8px;color:#fff;font-weight:bold;">45</div>
<div class="t" style="left:29.5px;top:656.52px;font-size:11.2px;color:#f0f0f1;font-weight:normal;">Produtos</div>
<svg style="left:7.8px;top:655.7px" width="13.5" height="13.5" viewBox="0 0 16 16"><rect x="1" y="3" width="14" height="3" fill="#a7aaad"/><rect x="2" y="6.8" width="12" height="7" fill="#a7aaad"/></svg>
<div class="t" style="left:29.5px;top:683.92px;font-size:11.2px;color:#f0f0f1;font-weight:normal;">Pagamentos</div>
<svg style="left:7.8px;top:683.1000000000001px" width="13.5" height="13.5" viewBox="0 0 16 16"><rect x="1" y="2.5" width="14" height="11" fill="none" stroke="#a7aaad" stroke-width="1.4"/><text x="8" y="11.5" font-size="9" font-family="Liberation Sans" font-weight="bold" fill="#a7aaad" text-anchor="middle">$</text></svg>
<div class="t" style="left:29.5px;top:711.22px;font-size:11.2px;color:#f0f0f1;font-weight:normal;">Análises</div>
<svg style="left:7.8px;top:710.4000000000001px" width="13.5" height="13.5" viewBox="0 0 16 16"><rect x="1" y="9" width="3" height="5" fill="#a7aaad"/><rect x="6" y="6" width="3" height="8" fill="#a7aaad"/><rect x="11" y="2" width="3" height="12" fill="#a7aaad"/></svg>
<div class="t" style="left:29.5px;top:738.72px;font-size:11.2px;color:#f0f0f1;font-weight:normal;">Marketing</div>
<svg style="left:7.8px;top:737.9000000000001px" width="13.5" height="13.5" viewBox="0 0 16 16"><path d="M1 6 H5 L12 2 V14 L5 10 H1 Z" fill="#a7aaad"/><path d="M4 10 L6 15" stroke="#a7aaad" stroke-width="2"/></svg>
<div class="t" style="left:29.5px;top:766.02px;font-size:11.2px;color:#f0f0f1;font-weight:normal;">Crocoblock</div>
<svg style="left:7.8px;top:765.2px" width="13.5" height="13.5" viewBox="0 0 16 16"><circle cx="8.5" cy="8" r="5" fill="none" stroke="#a7aaad" stroke-width="3.2" stroke-dasharray="22 9.4" transform="rotate(40 8.5 8)"/></svg>
<div class="t" style="left:29.5px;top:807.72px;font-size:11.2px;color:#f0f0f1;font-weight:normal;">JetEngine</div>
<svg style="left:7.8px;top:806.9000000000001px" width="13.5" height="13.5" viewBox="0 0 16 16"><rect x="1" y="1" width="14" height="14" rx="2" fill="none" stroke="#a7aaad" stroke-width="1"/><text x="8" y="10.5" font-size="6.5" font-family="Liberation Sans" font-weight="bold" fill="#a7aaad" text-anchor="middle">Jet</text></svg>
<div class="t" style="left:29.5px;top:835.02px;font-size:11.2px;color:#f0f0f1;font-weight:normal;">Smart Filters</div>
<svg style="left:7.8px;top:834.2px" width="13.5" height="13.5" viewBox="0 0 16 16"><rect x="1" y="1" width="14" height="14" rx="2" fill="none" stroke="#a7aaad" stroke-width="1"/><text x="8" y="10.5" font-size="6.5" font-family="Liberation Sans" font-weight="bold" fill="#a7aaad" text-anchor="middle">Jet</text></svg>
<div class="t" style="left:29.5px;top:876.22px;font-size:11.2px;color:#f0f0f1;font-weight:normal;">Vendedores</div>
<svg style="left:7.8px;top:875.4000000000001px" width="13.5" height="13.5" viewBox="0 0 16 16"><path d="M10 1 L15 6 L13 7 L10 10 L10 13 L3 6 L6 6 L9 3 Z" fill="#a7aaad"/><path d="M6 10 L1 15" stroke="#a7aaad" stroke-width="1.8"/></svg>
<div class="t" style="left:29.5px;top:903.52px;font-size:11.2px;color:#f0f0f1;font-weight:normal;">banners</div>
<svg style="left:7.8px;top:902.7px" width="13.5" height="13.5" viewBox="0 0 16 16"><path d="M10 1 L15 6 L13 7 L10 10 L10 13 L3 6 L6 6 L9 3 Z" fill="#a7aaad"/><path d="M6 10 L1 15" stroke="#a7aaad" stroke-width="1.8"/></svg>
<div class="t" style="left:29.5px;top:930.92px;font-size:11.2px;color:#f0f0f1;font-weight:normal;">slider</div>
<svg style="left:7.8px;top:930.1000000000001px" width="13.5" height="13.5" viewBox="0 0 16 16"><path d="M10 1 L15 6 L13 7 L10 10 L10 13 L3 6 L6 6 L9 3 Z" fill="#a7aaad"/><path d="M6 10 L1 15" stroke="#a7aaad" stroke-width="1.8"/></svg>
<div class="t" style="left:29.5px;top:958.22px;font-size:11.2px;color:#f0f0f1;font-weight:normal;">Marcas</div>
<svg style="left:7.8px;top:957.4000000000001px" width="13.5" height="13.5" viewBox="0 0 16 16"><path d="M10 1 L15 6 L13 7 L10 10 L10 13 L3 6 L6 6 L9 3 Z" fill="#a7aaad"/><path d="M6 10 L1 15" stroke="#a7aaad" stroke-width="1.8"/></svg>
<div class="t" style="left:29.5px;top:985.72px;font-size:11.2px;color:#f0f0f1;font-weight:normal;">Depoimentos</div>
<svg style="left:7.8px;top:984.9000000000001px" width="13.5" height="13.5" viewBox="0 0 16 16"><path d="M10 1 L15 6 L13 7 L10 10 L10 13 L3 6 L6 6 L9 3 Z" fill="#a7aaad"/><path d="M6 10 L1 15" stroke="#a7aaad" stroke-width="1.8"/></svg>
<div class="t" style="left:29.5px;top:1023.22px;font-size:11.2px;color:#f0f0f1;font-weight:normal;">Aparência</div>
<svg style="left:7.8px;top:1022.4000000000001px" width="13.5" height="13.5" viewBox="0 0 16 16"><path d="M14 2 L8 8 L6 6 L12 0 Z" fill="#a7aaad"/><path d="M1 15 L3 10 L6 13 Z M4 9 L7 12 L8 10 L6 8Z" fill="#a7aaad"/></svg>
<div class="t" style="left:29.5px;top:1050.42px;font-size:11.2px;color:#f0f0f1;font-weight:normal;">Plugins</div>
<svg style="left:7.8px;top:1049.6000000000001px" width="13.5" height="13.5" viewBox="0 0 16 16"><path d="M9 3 L13 7 L8 12 L4 8 Z" fill="#a7aaad"/><path d="M10 4 L13 1 M12 6 L15 3 M5 11 L1 15" stroke="#a7aaad" stroke-width="1.6"/></svg>
<div class="t" style="left:29.5px;top:1077.72px;font-size:11.2px;color:#f0f0f1;font-weight:normal;">Usuários</div>
<svg style="left:7.8px;top:1076.9px" width="13.5" height="13.5" viewBox="0 0 16 16"><circle cx="8" cy="5" r="3" fill="#a7aaad"/></svg>
<div class="b" style="left:0px;top:793px;width:129px;height:1px;background:#3c434a;"></div>
<div class="b" style="left:6.5px;top:788px;width:26px;height:10px;background:#1d2327;border:1px solid #3c434a;border-radius:5px;"></div>
<div class="t" style="left:-280.5px;width:600px;text-align:center;top:791.41px;font-size:4.6px;color:#8c8f94;font-weight:normal;">PLUGINS</div>
<div class="b" style="left:0px;top:862px;width:129px;height:1px;background:#3c434a;"></div>
<div class="b" style="left:6.5px;top:857px;width:34px;height:10px;background:#1d2327;border:1px solid #3c434a;border-radius:5px;"></div>
<div class="t" style="left:-276.5px;width:600px;text-align:center;top:860.41px;font-size:4.6px;color:#8c8f94;font-weight:normal;">POST TYPES</div>
<div class="b" style="left:0px;top:1008px;width:129px;height:1px;background:#3c434a;"></div>
<div class="b" style="left:129px;top:123px;width:1793px;height:957px;background:#f0f0f1;"></div>
<div class="b" style="left:129px;top:123px;width:1793px;height:48px;background:#ffffff;"></div>
<div class="t" style="left:161.3px;top:141.95px;font-size:11.05px;color:#1e1e1e;font-weight:bold;-webkit-text-stroke:0;">Pedidos</div>
<svg style="left:262px;top:147px;" width="12" height="18" viewBox="0 0 12 18"><path d="M1 1 L1 14 L4.5 11 L7 16.5 L9 15.5 L6.8 10.3 L11 10.3 Z" fill="#111" stroke="#fff" stroke-width="1"/></svg>
<svg style="left:1757.5px;top:133px;" width="14" height="16" viewBox="0 0 14 16"><path d="M1 15 V2 H7 V4 H12 V10 H7 V8 H2" fill="none" stroke="#1e1e1e" stroke-width="1.3"/></svg>
<svg style="left:1770px;top:133.3px;" width="1" height="1" viewBox="0 0 1 1"><circle cx="0" cy="0" r="1.8" fill="#b8284a"/></svg>
<div class="t" style="left:1741.7px;top:152.58px;font-size:10.77px;color:#50575e;font-weight:normal;">Atividade</div>
<svg style="left:1859px;top:140.8px;" width="1" height="1" viewBox="0 0 1 1"><circle cx="0" cy="0" r="8" fill="none" stroke="#3c3c3c" stroke-width="1.4"/><path d="M0 0 V-6 A6 6 0 1 1 -6 0 Z" fill="#555"/></svg>
<div class="t" style="left:1806.2px;top:152.41px;font-size:10.97px;color:#50575e;font-weight:normal;">Concluir configuração</div>
<div class="b" style="left:1723px;top:171px;width:111px;height:23px;background:#fff;border:1px solid #dcdcde;border-top:none;border-radius:0 0 3px 3px;"></div>
<div class="t" style="left:1736px;top:177.77px;font-size:10.79px;color:#50575e;font-weight:normal;">Opções de tela</div>
<svg style="left:1814px;top:179.5px;" width="9" height="6" viewBox="0 0 9 6"><path d="M0.5 0.5 H8.5 L4.5 5.5Z" fill="#50575e"/></svg>
<div class="b" style="left:1839px;top:171px;width:67px;height:23px;background:#fff;border:1px solid #dcdcde;border-top:none;border-radius:0 0 3px 3px;"></div>
<div class="t" style="left:1853.4px;top:177.77px;font-size:10.79px;color:#50575e;font-weight:normal;">Ajuda</div>
<svg style="left:1885px;top:179.5px;" width="9" height="6" viewBox="0 0 9 6"><path d="M0.5 0.5 H8.5 L4.5 5.5Z" fill="#50575e"/></svg>
<div class="t" style="left:145.4px;top:191.05px;font-size:17.43px;color:#1d2327;font-weight:normal;">Pedidos</div>
<div class="b" style="left:216px;top:186px;width:126px;height:25px;background:#f6f7f7;border:1px solid #5f78a6;border-radius:3px;"></div>
<div class="t" style="left:225px;top:194.25px;font-size:10.81px;color:#3b5b8f;font-weight:normal;">Adicionar novo pedido</div>
<div class="b" style="left:144px;top:226px;width:1762px;height:32px;background:#fff;border:1px solid #dcdcde;border-left:3px solid #dba617;box-shadow:0 1px 1px rgba(0,0,0,.04);"></div>
<div class="t" style="left:159.4px;top:236.82px;font-size:10.85px;color:#454a50;font-weight:normal;"><b style="color:#1d2327">Recomendação:</b> Instale o plugin gratuito de prevenção contra fraudes para WooCommerce e aumente a segurança dos seus pedidos. <span style="color:#3b5b8f;text-decoration:underline">Download</span></div>
<svg style="left:1889px;top:242px;" width="1" height="1" viewBox="0 0 1 1"><circle cx="0" cy="0" r="5.2" fill="#3c434a"/><path d="M-2.2 -2.2 L2.2 2.2 M2.2 -2.2 L-2.2 2.2" stroke="#fff" stroke-width="1.3"/></svg>
<div class="b" style="left:144px;top:270px;width:1762px;height:33px;background:#fff;border:1px solid #dcdcde;border-left:3px solid #00a32a;box-shadow:0 1px 1px rgba(0,0,0,.04);"></div>
<div class="t" style="left:159.4px;top:281.42px;font-size:10.85px;color:#454a50;font-weight:normal;">Status do pedido 1 alterado.</div>
<div class="t" style="left:146.5px;top:326.82px;font-size:10.85px;color:#3b5b8f;font-weight:normal;">Todos</div>
<div class="t" style="left:179.6px;top:326.82px;font-size:10.85px;color:#50575e;font-weight:normal;">(163)</div>
<div class="t" style="left:210.7px;top:326.82px;font-size:10.85px;color:#a7aaad;font-weight:normal;">|</div>
<div class="t" style="left:216.9px;top:326.82px;font-size:10.85px;color:#3b5b8f;font-weight:normal;">Processando</div>
<div class="t" style="left:283.9px;top:326.82px;font-size:10.85px;color:#50575e;font-weight:normal;">(45)</div>
<div class="t" style="left:310px;top:326.82px;font-size:10.85px;color:#a7aaad;font-weight:normal;">|</div>
<div class="t" style="left:317px;top:326.82px;font-size:10.85px;color:#3b5b8f;font-weight:normal;">Aguardando</div>
<div class="t" style="left:379px;top:326.82px;font-size:10.85px;color:#50575e;font-weight:normal;">(50)</div>
<div class="t" style="left:405px;top:326.82px;font-size:10.85px;color:#a7aaad;font-weight:normal;">|</div>
<div class="t" style="left:411.7px;top:326.82px;font-size:10.85px;color:#3b5b8f;font-weight:normal;">Concluído</div>
<div class="t" style="left:464.2px;top:326.82px;font-size:10.85px;color:#50575e;font-weight:normal;">(3)</div>
<div class="t" style="left:483.7px;top:326.82px;font-size:10.85px;color:#a7aaad;font-weight:normal;">|</div>
<div class="t" style="left:490.3px;top:326.82px;font-size:10.85px;color:#3b5b8f;font-weight:normal;">Cancelado</div>
<div class="t" style="left:545.7px;top:326.82px;font-size:10.85px;color:#50575e;font-weight:normal;">(27)</div>
<div class="t" style="left:570.5px;top:326.82px;font-size:10.85px;color:#a7aaad;font-weight:normal;">|</div>
<div class="t" style="left:577.2px;top:326.82px;font-size:10.85px;color:#3b5b8f;font-weight:normal;">Malsucedido</div>
<div class="t" style="left:643px;top:326.82px;font-size:10.85px;color:#50575e;font-weight:normal;">(37)</div>
<div class="b" style="left:1652.5px;top:324px;width:139px;height:24px;background:#fff;border:1px solid #8c8f94;border-radius:3px;"></div>
<div class="b" style="left:1799px;top:324px;width:107px;height:24px;background:#f6f7f7;border:1px solid #5f78a6;border-radius:3px;"></div>
<div class="t" style="left:1807.5px;top:331.02px;font-size:10.85px;color:#3b5b8f;font-weight:normal;">Pesquisar pedidos</div>
<div class="b" style="left:145.6px;top:361px;width:160px;height:25.6px;background:#fff;border:1px solid #8c8f94;border-radius:3px;"></div>
<div class="t" style="left:152.6px;top:368.82px;font-size:10.85px;color:#454a50;font-weight:normal;">Ações em massa</div>
<svg style="left:288.6px;top:370px;" width="10" height="7" viewBox="0 0 10 7"><path d="M1 1 L5 5 L9 1" fill="none" stroke="#2c3338" stroke-width="1.5"/></svg>
<div class="b" style="left:311.3px;top:361px;width:50.2px;height:25.6px;background:#f6f7f7;border:1px solid #5f78a6;border-radius:3px;"></div>
<div class="t" style="left:36.400000000000034px;width:600px;text-align:center;top:368.82px;font-size:10.85px;color:#3b5b8f;font-weight:normal;">Aplicar</div>
<div class="b" style="left:376px;top:361px;width:108.7px;height:25.6px;background:#fff;border:1px solid #8c8f94;border-radius:3px;"></div>
<div class="t" style="left:383px;top:368.82px;font-size:10.85px;color:#454a50;font-weight:normal;">Todas as datas</div>
<svg style="left:467.7px;top:370px;" width="10" height="7" viewBox="0 0 10 7"><path d="M1 1 L5 5 L9 1" fill="none" stroke="#2c3338" stroke-width="1.5"/></svg>
<div class="b" style="left:491.3px;top:361px;width:143px;height:25.6px;background:#fff;border:1px solid #8c8f94;border-radius:3px;"></div>
<div class="t" style="left:498.3px;top:368.82px;font-size:10.85px;color:#454a50;font-weight:normal;">All sales channels</div>
<svg style="left:617.3px;top:370px;" width="10" height="7" viewBox="0 0 10 7"><path d="M1 1 L5 5 L9 1" fill="none" stroke="#2c3338" stroke-width="1.5"/></svg>
<div class="b" style="left:640.3px;top:361px;width:192px;height:25.6px;background:#fff;border:1px solid #8c8f94;border-radius:3px;"></div>
<div class="t" style="left:647.3px;top:368.82px;font-size:10.85px;color:#8c8f94;font-weight:normal;">Filtrar por cliente cadastrado</div>
<svg style="left:815.3px;top:370px;" width="10" height="7" viewBox="0 0 10 7"><path d="M1 1 L5 5 L9 1" fill="none" stroke="#2c3338" stroke-width="1.5"/></svg>
<div class="b" style="left:837.2px;top:361px;width:46.3px;height:25.6px;background:#f6f7f7;border:1px solid #5f78a6;border-radius:3px;"></div>
<div class="t" style="left:560.35px;width:600px;text-align:center;top:368.82px;font-size:10.85px;color:#3b5b8f;font-weight:normal;">Filtrar</div>
<div class="t" style="left:1694px;top:368.77px;font-size:10.67px;color:#454a50;font-weight:normal;">162 itens</div>
<div class="b" style="left:1746.4px;top:362.4px;width:23.6px;height:23px;background:#f6f7f7;border:1px solid #dcdcde;border-radius:3px;"></div>
<div class="t" style="left:1458.2px;width:600px;text-align:center;top:367.84px;font-size:12px;color:#a7aaad;font-weight:normal;">«</div>
<div class="b" style="left:1773.5px;top:362.4px;width:23px;height:23px;background:#f6f7f7;border:1px solid #dcdcde;border-radius:3px;"></div>
<div class="t" style="left:1485.0px;width:600px;text-align:center;top:367.84px;font-size:12px;color:#a7aaad;font-weight:normal;">‹</div>
<div class="b" style="left:1800.4px;top:361.4px;width:24px;height:24.6px;background:#fff;border:1px solid #8c8f94;border-radius:3px;"></div>
<div class="t" style="left:1512.4px;width:600px;text-align:center;top:368.62px;font-size:10.85px;color:#454a50;font-weight:normal;">1</div>
<div class="t" style="left:1829px;top:368.62px;font-size:10.85px;color:#454a50;font-weight:normal;">de 9</div>
<div class="b" style="left:1855.6px;top:362.4px;width:23.4px;height:23px;background:#f6f7f7;border:1px solid #5f78a6;border-radius:3px;"></div>
<div class="t" style="left:1567.3px;width:600px;text-align:center;top:367.84px;font-size:12px;color:#3b5b8f;font-weight:normal;">›</div>
<div class="b" style="left:1882.5px;top:362.4px;width:23.4px;height:23px;background:#f6f7f7;border:1px solid #5f78a6;border-radius:3px;"></div>
<div class="t" style="left:1594.2px;width:600px;text-align:center;top:367.84px;font-size:12px;color:#3b5b8f;font-weight:normal;">»</div>
<div class="b" style="left:145px;top:396px;width:761px;height:1px;"></div>
<div class="b" style="left:145px;top:396px;width:1761px;height:700px;background:#fff;border:1px solid #c3c4c7;"></div>
<div class="b" style="left:146px;top:434px;width:1759px;height:1px;background:#c3c4c7;"></div>
<div class="b" style="left:157px;top:409px;width:13px;height:13px;background:#fff;border:1px solid #8c8f94;border-radius:3px;"></div>
<div class="t" style="left:215px;top:410.22px;font-size:10.85px;color:#3b5b8f;font-weight:normal;">Pedido</div>
<svg style="left:255.4px;top:409.2px;" width="7" height="12" viewBox="0 0 7 12"><path d="M0 4.6 L3.1 0 L6.2 4.6Z M0 7 L3.1 11.5 L6.2 7Z" fill="#9a9a9a"/></svg>
<div class="t" style="left:623.3px;top:410.22px;font-size:10.85px;color:#3b5b8f;font-weight:normal;">Data</div>
<svg style="left:652px;top:409.2px;" width="7" height="12" viewBox="0 0 7 12"><path d="M0 4.6 L3.1 0 L6.2 4.6Z" fill="#9a9a9a"/><path d="M0 7 L3.1 11.5 L6.2 7Z" fill="#1d2327"/></svg>
<div class="t" style="left:855px;top:410.22px;font-size:10.85px;color:#1d2327;font-weight:normal;">Status</div>
<div class="t" style="left:1157px;top:410.22px;font-size:10.85px;color:#1d2327;font-weight:normal;">ERP</div>
<svg style="left:1565px;top:409.2px;" width="7" height="12" viewBox="0 0 7 12"><path d="M0 4.6 L3.1 0 L6.2 4.6Z M0 7 L3.1 11.5 L6.2 7Z" fill="#9a9a9a"/></svg>
<div class="t" style="left:1574.9px;top:410.22px;font-size:10.85px;color:#3b5b8f;font-weight:normal;">Total</div>
<div class="t" style="left:1621.9px;top:410.22px;font-size:10.85px;color:#1d2327;font-weight:normal;">Origem</div>
<div class="b" style="left:146px;top:434.4px;width:1759px;height:64px;background:#f5f6f6;"></div>
<div class="b" style="left:157px;top:459.9px;width:13px;height:13px;background:#fff;border:1px solid #8c8f94;border-radius:3px;"></div>
<div class="t" style="left:214.5px;top:460.29px;font-size:11.0px;color:#3b5b8f;font-weight:normal;-webkit-text-stroke:0.4px #3b5b8f;letter-spacing:0.17px;">#652991 PABLO CANGUSSU</div>
<svg style="left:583.8px;top:462.4px;" width="12" height="6" viewBox="0 0 12 6"><path d="M0.5 4.8 Q6 0.2 11.5 4.8" fill="none" stroke="#2f4f85" stroke-width="1.3" stroke-linecap="round"/><circle cx="6" cy="4.5" r="2.4" fill="#2f4f85"/></svg>
<div class="t" style="left:622.2px;top:461.72px;font-size:10.85px;color:#454a50;font-weight:normal;">42 minutos atrás</div>
<div class="b" style="left:854.3px;top:453.4px;width:84px;height:26.5px;background:#c6e1c6;border-radius:3px;"></div>
<div class="t" style="left:596.3px;width:600px;text-align:center;top:461.77px;font-size:10.79px;color:#2c5a1a;font-weight:normal;">Processando</div>
<div class="t" style="left:1156.8px;top:452.26px;font-size:10.32px;color:#3b5b8f;font-weight:bold;-webkit-text-stroke:0;">pedido enviado ao ERP</div>
<div class="t" style="left:1156.8px;top:472.5px;font-size:9.69px;color:#454a50;font-weight:normal;">2026-03-04 10:40:01</div>
<div class="t" style="right:334.4000000000001px;top:461.72px;font-size:10.85px;color:#454a50;font-weight:normal;">R$ 20.010,0</div>
<div class="t" style="left:1621px;top:461.72px;font-size:10.85px;color:#454a50;font-weight:normal;">Direto</div>
<div class="b" style="left:157px;top:523.9px;width:13px;height:13px;background:#fff;border:1px solid #8c8f94;border-radius:3px;"></div>
<div class="t" style="left:214.5px;top:524.29px;font-size:11.0px;color:#3b5b8f;font-weight:normal;-webkit-text-stroke:0.4px #3b5b8f;letter-spacing:0.17px;">#652764 teste teste</div>
<svg style="left:583.8px;top:526.4px;" width="12" height="6" viewBox="0 0 12 6"><path d="M0.5 4.8 Q6 0.2 11.5 4.8" fill="none" stroke="#2f4f85" stroke-width="1.3" stroke-linecap="round"/><circle cx="6" cy="4.5" r="2.4" fill="#2f4f85"/></svg>
<div class="t" style="left:622.2px;top:525.72px;font-size:10.85px;color:#454a50;font-weight:normal;">19 de dezembro de 2025</div>
<div class="b" style="left:854.3px;top:517.4px;width:84px;height:26.5px;background:#c6e1c6;border-radius:3px;"></div>
<div class="t" style="left:596.3px;width:600px;text-align:center;top:525.77px;font-size:10.79px;color:#2c5a1a;font-weight:normal;">Processando</div>
<div class="t" style="left:1156.8px;top:515.25px;font-size:10.34px;color:#9a2b35;font-weight:bold;-webkit-text-stroke:0;">falha no envio</div>
<div class="t" style="left:1156.8px;top:537.49px;font-size:9.34px;color:#454a50;font-weight:normal;">Existe um pedido com este cdigo de origem...</div>
<div class="t" style="right:334.4000000000001px;top:525.72px;font-size:10.85px;color:#454a50;font-weight:normal;">R$ 3.590,0</div>
<div class="t" style="left:1621px;top:525.72px;font-size:10.85px;color:#454a50;font-weight:normal;">Direto</div>
<div class="b" style="left:146px;top:562.4px;width:1759px;height:43.33px;background:#f5f6f6;"></div>
<div class="b" style="left:157px;top:577.5649999999999px;width:13px;height:13px;background:#fff;border:1px solid #8c8f94;border-radius:3px;"></div>
<div class="t" style="left:214.5px;top:577.95px;font-size:11.0px;color:#3b5b8f;font-weight:normal;-webkit-text-stroke:0.4px #3b5b8f;letter-spacing:0.17px;">#643773 Pablo Batista</div>
<svg style="left:583.8px;top:580.0649999999999px;" width="12" height="6" viewBox="0 0 12 6"><path d="M0.5 4.8 Q6 0.2 11.5 4.8" fill="none" stroke="#2f4f85" stroke-width="1.3" stroke-linecap="round"/><circle cx="6" cy="4.5" r="2.4" fill="#2f4f85"/></svg>
<div class="t" style="left:622.2px;top:579.38px;font-size:10.85px;color:#454a50;font-weight:normal;">14 de novembro de 2025</div>
<div class="b" style="left:854.3px;top:571.0649999999999px;width:80px;height:26.5px;background:#f3dca5;border-radius:3px;"></div>
<div class="t" style="left:594.3px;width:600px;text-align:center;top:579.43px;font-size:10.79px;color:#5e4507;font-weight:normal;">Aguardando</div>
<div class="t" style="left:1157px;top:579.47px;font-size:10.74px;color:#454a50;font-weight:normal;">aguardando envio</div>
<div class="t" style="right:334.4000000000001px;top:579.38px;font-size:10.85px;color:#454a50;font-weight:normal;">R$ 910,0</div>
<div class="t" style="left:1621px;top:579.38px;font-size:10.85px;color:#454a50;font-weight:normal;">Direto</div>
<div class="b" style="left:157px;top:620.895px;width:13px;height:13px;background:#fff;border:1px solid #8c8f94;border-radius:3px;"></div>
<div class="t" style="left:214.5px;top:621.28px;font-size:11.0px;color:#3b5b8f;font-weight:normal;-webkit-text-stroke:0.4px #3b5b8f;letter-spacing:0.17px;">#643744 Pablo Batista</div>
<svg style="left:583.8px;top:623.395px;" width="12" height="6" viewBox="0 0 12 6"><path d="M0.5 4.8 Q6 0.2 11.5 4.8" fill="none" stroke="#2f4f85" stroke-width="1.3" stroke-linecap="round"/><circle cx="6" cy="4.5" r="2.4" fill="#2f4f85"/></svg>
<div class="t" style="left:622.2px;top:622.71px;font-size:10.85px;color:#454a50;font-weight:normal;">14 de novembro de 2025</div>
<div class="b" style="left:854.3px;top:614.395px;width:80px;height:26.5px;background:#f3dca5;border-radius:3px;"></div>
<div class="t" style="left:594.3px;width:600px;text-align:center;top:622.76px;font-size:10.79px;color:#5e4507;font-weight:normal;">Aguardando</div>
<div class="t" style="left:1157px;top:622.8px;font-size:10.74px;color:#454a50;font-weight:normal;">aguardando envio</div>
<div class="t" style="right:334.4000000000001px;top:622.71px;font-size:10.85px;color:#454a50;font-weight:normal;">R$ 22,8</div>
<div class="t" style="left:1621px;top:622.71px;font-size:10.85px;color:#454a50;font-weight:normal;">Direto</div>
<div class="b" style="left:146px;top:649.0600000000001px;width:1759px;height:43.33px;background:#f5f6f6;"></div>
<div class="b" style="left:157px;top:664.225px;width:13px;height:13px;background:#fff;border:1px solid #8c8f94;border-radius:3px;"></div>
<div class="t" style="left:214.5px;top:664.61px;font-size:11.0px;color:#3b5b8f;font-weight:normal;-webkit-text-stroke:0.4px #3b5b8f;letter-spacing:0.17px;">#643742 Pablo Batista</div>
<svg style="left:583.8px;top:666.725px;" width="12" height="6" viewBox="0 0 12 6"><path d="M0.5 4.8 Q6 0.2 11.5 4.8" fill="none" stroke="#2f4f85" stroke-width="1.3" stroke-linecap="round"/><circle cx="6" cy="4.5" r="2.4" fill="#2f4f85"/></svg>
<div class="t" style="left:622.2px;top:666.04px;font-size:10.85px;color:#454a50;font-weight:normal;">14 de novembro de 2025</div>
<div class="b" style="left:854.3px;top:657.725px;width:80px;height:26.5px;background:#f3dca5;border-radius:3px;"></div>
<div class="t" style="left:594.3px;width:600px;text-align:center;top:666.09px;font-size:10.79px;color:#5e4507;font-weight:normal;">Aguardando</div>
<div class="t" style="left:1157px;top:666.13px;font-size:10.74px;color:#454a50;font-weight:normal;">aguardando envio</div>
<div class="t" style="right:334.4000000000001px;top:666.04px;font-size:10.85px;color:#454a50;font-weight:normal;">R$ 10,0</div>
<div class="t" style="left:1621px;top:666.04px;font-size:10.85px;color:#454a50;font-weight:normal;">Direto</div>
<div class="b" style="left:157px;top:707.5550000000001px;width:13px;height:13px;background:#fff;border:1px solid #8c8f94;border-radius:3px;"></div>
<div class="t" style="left:214.5px;top:707.94px;font-size:11.0px;color:#3b5b8f;font-weight:normal;-webkit-text-stroke:0.4px #3b5b8f;letter-spacing:0.17px;">#643741 Pablo Batista</div>
<svg style="left:583.8px;top:710.0550000000001px;" width="12" height="6" viewBox="0 0 12 6"><path d="M0.5 4.8 Q6 0.2 11.5 4.8" fill="none" stroke="#2f4f85" stroke-width="1.3" stroke-linecap="round"/><circle cx="6" cy="4.5" r="2.4" fill="#2f4f85"/></svg>
<div class="t" style="left:622.2px;top:709.37px;font-size:10.85px;color:#454a50;font-weight:normal;">14 de novembro de 2025</div>
<div class="b" style="left:854.3px;top:701.0550000000001px;width:70px;height:26.5px;background:#c8d7e1;border-radius:3px;"></div>
<div class="t" style="left:589.3px;width:600px;text-align:center;top:709.42px;font-size:10.79px;color:#2e4453;font-weight:normal;">Concluído</div>
<div class="t" style="left:1157px;top:709.46px;font-size:10.74px;color:#454a50;font-weight:normal;">aguardando envio</div>
<div class="t" style="right:334.4000000000001px;top:709.37px;font-size:10.85px;color:#454a50;font-weight:normal;">R$ 9.203,8</div>
<div class="t" style="left:1621px;top:709.37px;font-size:10.85px;color:#454a50;font-weight:normal;">Direto</div>
<div class="b" style="left:146px;top:735.7200000000001px;width:1759px;height:43.33px;background:#f5f6f6;"></div>
<div class="b" style="left:157px;top:750.8850000000001px;width:13px;height:13px;background:#fff;border:1px solid #8c8f94;border-radius:3px;"></div>
<div class="t" style="left:214.5px;top:751.27px;font-size:11.0px;color:#3b5b8f;font-weight:normal;-webkit-text-stroke:0.4px #3b5b8f;letter-spacing:0.17px;">#643592 Pablo Batista</div>
<svg style="left:583.8px;top:753.3850000000001px;" width="12" height="6" viewBox="0 0 12 6"><path d="M0.5 4.8 Q6 0.2 11.5 4.8" fill="none" stroke="#2f4f85" stroke-width="1.3" stroke-linecap="round"/><circle cx="6" cy="4.5" r="2.4" fill="#2f4f85"/></svg>
<div class="t" style="left:622.2px;top:752.7px;font-size:10.85px;color:#454a50;font-weight:normal;">14 de novembro de 2025</div>
<div class="b" style="left:854.3px;top:744.3850000000001px;width:80px;height:26.5px;background:#f3dca5;border-radius:3px;"></div>
<div class="t" style="left:594.3px;width:600px;text-align:center;top:752.75px;font-size:10.79px;color:#5e4507;font-weight:normal;">Aguardando</div>
<div class="t" style="left:1157px;top:752.79px;font-size:10.74px;color:#454a50;font-weight:normal;">aguardando envio</div>
<div class="t" style="right:334.4000000000001px;top:752.7px;font-size:10.85px;color:#454a50;font-weight:normal;">R$ 27,9</div>
<div class="t" style="left:1621px;top:752.7px;font-size:10.85px;color:#454a50;font-weight:normal;">Direto</div>
<div class="b" style="left:157px;top:794.2150000000001px;width:13px;height:13px;background:#fff;border:1px solid #8c8f94;border-radius:3px;"></div>
<div class="t" style="left:214.5px;top:794.6px;font-size:11.0px;color:#3b5b8f;font-weight:normal;-webkit-text-stroke:0.4px #3b5b8f;letter-spacing:0.17px;">#643591 Pablo Batista</div>
<svg style="left:583.8px;top:796.7150000000001px;" width="12" height="6" viewBox="0 0 12 6"><path d="M0.5 4.8 Q6 0.2 11.5 4.8" fill="none" stroke="#2f4f85" stroke-width="1.3" stroke-linecap="round"/><circle cx="6" cy="4.5" r="2.4" fill="#2f4f85"/></svg>
<div class="t" style="left:622.2px;top:796.03px;font-size:10.85px;color:#454a50;font-weight:normal;">14 de novembro de 2025</div>
<div class="b" style="left:854.3px;top:787.7150000000001px;width:70px;height:26.5px;background:#c8d7e1;border-radius:3px;"></div>
<div class="t" style="left:589.3px;width:600px;text-align:center;top:796.08px;font-size:10.79px;color:#2e4453;font-weight:normal;">Concluído</div>
<div class="t" style="left:1157px;top:796.12px;font-size:10.74px;color:#454a50;font-weight:normal;">aguardando envio</div>
<div class="t" style="right:334.4000000000001px;top:796.03px;font-size:10.85px;color:#454a50;font-weight:normal;">R$ 26,4</div>
<div class="t" style="left:1621px;top:796.03px;font-size:10.85px;color:#454a50;font-weight:normal;">Direto</div>
<div class="b" style="left:146px;top:822.3800000000002px;width:1759px;height:43.33px;background:#f5f6f6;"></div>
<div class="b" style="left:157px;top:837.5450000000002px;width:13px;height:13px;background:#fff;border:1px solid #8c8f94;border-radius:3px;"></div>
<div class="t" style="left:214.5px;top:837.93px;font-size:11.0px;color:#3b5b8f;font-weight:normal;-webkit-text-stroke:0.4px #3b5b8f;letter-spacing:0.17px;">#643590 Pablo Batista</div>
<svg style="left:583.8px;top:840.0450000000002px;" width="12" height="6" viewBox="0 0 12 6"><path d="M0.5 4.8 Q6 0.2 11.5 4.8" fill="none" stroke="#2f4f85" stroke-width="1.3" stroke-linecap="round"/><circle cx="6" cy="4.5" r="2.4" fill="#2f4f85"/></svg>
<div class="t" style="left:622.2px;top:839.36px;font-size:10.85px;color:#454a50;font-weight:normal;">14 de novembro de 2025</div>
<div class="b" style="left:854.3px;top:831.0450000000002px;width:80px;height:26.5px;background:#f3dca5;border-radius:3px;"></div>
<div class="t" style="left:594.3px;width:600px;text-align:center;top:839.41px;font-size:10.79px;color:#5e4507;font-weight:normal;">Aguardando</div>
<div class="t" style="left:1157px;top:839.45px;font-size:10.74px;color:#454a50;font-weight:normal;">aguardando envio</div>
<div class="t" style="right:334.4000000000001px;top:839.36px;font-size:10.85px;color:#454a50;font-weight:normal;">R$ 26,4</div>
<div class="t" style="left:1621px;top:839.36px;font-size:10.85px;color:#454a50;font-weight:normal;">Direto</div>
<div class="b" style="left:157px;top:880.8750000000002px;width:13px;height:13px;background:#fff;border:1px solid #8c8f94;border-radius:3px;"></div>
<div class="t" style="left:214.5px;top:881.26px;font-size:11.0px;color:#3b5b8f;font-weight:normal;-webkit-text-stroke:0.4px #3b5b8f;letter-spacing:0.17px;">#643589 Pablo Batista</div>
<svg style="left:583.8px;top:883.3750000000002px;" width="12" height="6" viewBox="0 0 12 6"><path d="M0.5 4.8 Q6 0.2 11.5 4.8" fill="none" stroke="#2f4f85" stroke-width="1.3" stroke-linecap="round"/><circle cx="6" cy="4.5" r="2.4" fill="#2f4f85"/></svg>
<div class="t" style="left:622.2px;top:882.69px;font-size:10.85px;color:#454a50;font-weight:normal;">14 de novembro de 2025</div>
<div class="b" style="left:854.3px;top:874.3750000000002px;width:80px;height:26.5px;background:#f3dca5;border-radius:3px;"></div>
<div class="t" style="left:594.3px;width:600px;text-align:center;top:882.74px;font-size:10.79px;color:#5e4507;font-weight:normal;">Aguardando</div>
<div class="t" style="left:1157px;top:882.78px;font-size:10.74px;color:#454a50;font-weight:normal;">aguardando envio</div>
<div class="t" style="right:334.4000000000001px;top:882.69px;font-size:10.85px;color:#454a50;font-weight:normal;">R$ 26,4</div>
<div class="t" style="left:1621px;top:882.69px;font-size:10.85px;color:#454a50;font-weight:normal;">Direto</div>
<div class="b" style="left:146px;top:909.0400000000003px;width:1759px;height:43.33px;background:#f5f6f6;"></div>
<div class="b" style="left:157px;top:924.2050000000003px;width:13px;height:13px;background:#fff;border:1px solid #8c8f94;border-radius:3px;"></div>
<div class="t" style="left:214.5px;top:924.59px;font-size:11.0px;color:#3b5b8f;font-weight:normal;-webkit-text-stroke:0.4px #3b5b8f;letter-spacing:0.17px;">#643588 Pablo Batista</div>
<svg style="left:583.8px;top:926.7050000000003px;" width="12" height="6" viewBox="0 0 12 6"><path d="M0.5 4.8 Q6 0.2 11.5 4.8" fill="none" stroke="#2f4f85" stroke-width="1.3" stroke-linecap="round"/><circle cx="6" cy="4.5" r="2.4" fill="#2f4f85"/></svg>
<div class="t" style="left:622.2px;top:926.02px;font-size:10.85px;color:#454a50;font-weight:normal;">14 de novembro de 2025</div>
<div class="b" style="left:854.3px;top:917.7050000000003px;width:80px;height:26.5px;background:#f3dca5;border-radius:3px;"></div>
<div class="t" style="left:594.3px;width:600px;text-align:center;top:926.07px;font-size:10.79px;color:#5e4507;font-weight:normal;">Aguardando</div>
<div class="t" style="left:1157px;top:926.11px;font-size:10.74px;color:#454a50;font-weight:normal;">aguardando envio</div>
<div class="t" style="right:334.4000000000001px;top:926.02px;font-size:10.85px;color:#454a50;font-weight:normal;">R$ 26,4</div>
<div class="t" style="left:1621px;top:926.02px;font-size:10.85px;color:#454a50;font-weight:normal;">Direto</div>
<div class="b" style="left:157px;top:967.5350000000003px;width:13px;height:13px;background:#fff;border:1px solid #8c8f94;border-radius:3px;"></div>
<div class="t" style="left:214.5px;top:967.92px;font-size:11.0px;color:#3b5b8f;font-weight:normal;-webkit-text-stroke:0.4px #3b5b8f;letter-spacing:0.17px;">#643587 Pablo Batista</div>
<svg style="left:583.8px;top:970.0350000000003px;" width="12" height="6" viewBox="0 0 12 6"><path d="M0.5 4.8 Q6 0.2 11.5 4.8" fill="none" stroke="#2f4f85" stroke-width="1.3" stroke-linecap="round"/><circle cx="6" cy="4.5" r="2.4" fill="#2f4f85"/></svg>
<div class="t" style="left:622.2px;top:969.35px;font-size:10.85px;color:#454a50;font-weight:normal;">14 de novembro de 2025</div>
<div class="b" style="left:854.3px;top:961.0350000000003px;width:80px;height:26.5px;background:#f3dca5;border-radius:3px;"></div>
<div class="t" style="left:594.3px;width:600px;text-align:center;top:969.4px;font-size:10.79px;color:#5e4507;font-weight:normal;">Aguardando</div>
<div class="t" style="left:1157px;top:969.44px;font-size:10.74px;color:#454a50;font-weight:normal;">aguardando envio</div>
<div class="t" style="right:334.4000000000001px;top:969.35px;font-size:10.85px;color:#454a50;font-weight:normal;">R$ 320,9</div>
<div class="t" style="left:1621px;top:969.35px;font-size:10.85px;color:#454a50;font-weight:normal;">Direto</div>
<div class="b" style="left:146px;top:995.7000000000004px;width:1759px;height:43.33px;background:#f5f6f6;"></div>
<div class="b" style="left:157px;top:1010.8650000000004px;width:13px;height:13px;background:#fff;border:1px solid #8c8f94;border-radius:3px;"></div>
<div class="t" style="left:214.5px;top:1011.25px;font-size:11.0px;color:#3b5b8f;font-weight:normal;-webkit-text-stroke:0.4px #3b5b8f;letter-spacing:0.17px;">#643108 Pablo Batista</div>
<svg style="left:583.8px;top:1013.3650000000004px;" width="12" height="6" viewBox="0 0 12 6"><path d="M0.5 4.8 Q6 0.2 11.5 4.8" fill="none" stroke="#2f4f85" stroke-width="1.3" stroke-linecap="round"/><circle cx="6" cy="4.5" r="2.4" fill="#2f4f85"/></svg>
<div class="t" style="left:622.2px;top:1012.68px;font-size:10.85px;color:#454a50;font-weight:normal;">24 de outubro de 2025</div>
<div class="b" style="left:854.3px;top:1004.3650000000004px;width:80px;height:26.5px;background:#f3dca5;border-radius:3px;"></div>
<div class="t" style="left:594.3px;width:600px;text-align:center;top:1012.73px;font-size:10.79px;color:#5e4507;font-weight:normal;">Aguardando</div>
<div class="t" style="left:1157px;top:1012.77px;font-size:10.74px;color:#454a50;font-weight:normal;">aguardando envio</div>
<div class="t" style="right:334.4000000000001px;top:1012.68px;font-size:10.85px;color:#454a50;font-weight:normal;">R$ 1.221,2</div>
<div class="t" style="left:1621px;top:1012.68px;font-size:10.85px;color:#454a50;font-weight:normal;">Direto</div>
<div class="b" style="left:157px;top:1054.1950000000004px;width:13px;height:13px;background:#fff;border:1px solid #8c8f94;border-radius:3px;"></div>
<div class="t" style="left:214.5px;top:1054.58px;font-size:11.0px;color:#3b5b8f;font-weight:normal;-webkit-text-stroke:0.4px #3b5b8f;letter-spacing:0.17px;">#643098 Pablo Batista</div>
<svg style="left:583.8px;top:1056.6950000000004px;" width="12" height="6" viewBox="0 0 12 6"><path d="M0.5 4.8 Q6 0.2 11.5 4.8" fill="none" stroke="#2f4f85" stroke-width="1.3" stroke-linecap="round"/><circle cx="6" cy="4.5" r="2.4" fill="#2f4f85"/></svg>
<div class="t" style="left:622.2px;top:1056.01px;font-size:10.85px;color:#454a50;font-weight:normal;">24 de outubro de 2025</div>
<div class="b" style="left:854.3px;top:1047.6950000000004px;width:80px;height:26.5px;background:#f3dca5;border-radius:3px;"></div>
<div class="t" style="left:594.3px;width:600px;text-align:center;top:1056.06px;font-size:10.79px;color:#5e4507;font-weight:normal;">Aguardando</div>
<div class="t" style="left:1157px;top:1056.1px;font-size:10.74px;color:#454a50;font-weight:normal;">aguardando envio</div>
<div class="t" style="right:334.4000000000001px;top:1056.01px;font-size:10.85px;color:#454a50;font-weight:normal;">R$ 10.010,0</div>
<div class="t" style="left:1621px;top:1056.01px;font-size:10.85px;color:#454a50;font-weight:normal;">Direto</div>
<div class="b" style="left:1896px;top:911px;width:30px;height:28.5px;background:#232323;border-radius:14px 0 0 14px;"></div>
<svg style="left:1904px;top:918px;" width="14" height="14" viewBox="0 0 14 14"><path d="M4.7 2.2 Q5.45 6.45 9.7 7.2 Q5.45 7.95 4.7 12.2 Q3.95 7.95 -0.2999999999999998 7.2 Q3.95 6.45 4.7 2.2Z" fill="#fff"/><path d="M11.8 -0.10000000000000009 Q12.16 1.94 14.200000000000001 2.3 Q12.16 2.6599999999999997 11.8 4.699999999999999 Q11.440000000000001 2.6599999999999997 9.4 2.3 Q11.440000000000001 1.94 11.8 -0.10000000000000009Z" fill="#fff"/><path d="M11.8 9.9 Q12.16 11.940000000000001 14.200000000000001 12.3 Q12.16 12.66 11.8 14.700000000000001 Q11.440000000000001 12.66 9.4 12.3 Q11.440000000000001 11.940000000000001 11.8 9.9Z" fill="#fff"/></svg>
<div class="b" style="left:1922px;top:98px;width:12px;height:982px;background:#2b2b2b;"></div>
<div class="b" style="left:1925px;top:100px;width:7px;height:694px;background:#666666;border-radius:3.5px;"></div>
<svg style="left:0px;top:0px;" width="14" height="14" viewBox="0 0 14 14"><path d="M0 0 H12 Q0 0 0 12 Z" fill="#000"/></svg>
<svg style="left:0px;top:1062px;" width="14" height="18" viewBox="0 0 14 18"><path d="M0 0 Q0 18 14 18 H0 Z" fill="#000"/></svg>
<svg style="left:1922px;top:0px;" width="12" height="12" viewBox="0 0 12 12"><path d="M12 0 H2 Q12 0 12 10 Z" fill="#000"/></svg>
</body></html>
